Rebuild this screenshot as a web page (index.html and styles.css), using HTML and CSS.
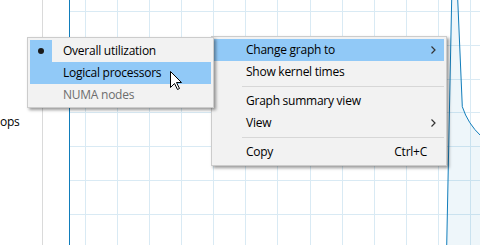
FILE: index.html
```html
<!DOCTYPE html>
<html lang="en">
<head>
  <meta charset="UTF-8" />
  <title>CPU graph menu</title>
  <link rel="stylesheet" href="styles.css">
</head>
<body>
  <div class="window">
    <div class="side"><span class="side-label">ops</span></div>
    <div class="gap"></div>
    <div class="graph">
      <svg class="graph-svg" width="410" height="245" viewBox="0 0 410 245">
        <g class="grid">
          <line x1="15.5" y1="0" x2="15.5" y2="245" />
          <line x1="47.5" y1="0" x2="47.5" y2="245" />
          <line x1="79.5" y1="0" x2="79.5" y2="245" />
          <line x1="111.5" y1="0" x2="111.5" y2="245" />
          <line x1="143.5" y1="0" x2="143.5" y2="245" />
          <line x1="175.5" y1="0" x2="175.5" y2="245" />
          <line x1="207.5" y1="0" x2="207.5" y2="245" />
          <line x1="240.5" y1="0" x2="240.5" y2="245" />
          <line x1="272.5" y1="0" x2="272.5" y2="245" />
          <line x1="304.5" y1="0" x2="304.5" y2="245" />
          <line x1="336.5" y1="0" x2="336.5" y2="245" />
          <line x1="368.5" y1="0" x2="368.5" y2="245" />
          <line x1="400.5" y1="0" x2="400.5" y2="245" />
          <line x1="0" y1="11.5" x2="410" y2="11.5" />
          <line x1="0" y1="45.5" x2="410" y2="45.5" />
          <line x1="0" y1="79.5" x2="410" y2="79.5" />
          <line x1="0" y1="112.5" x2="410" y2="112.5" />
          <line x1="0" y1="146.5" x2="410" y2="146.5" />
          <line x1="0" y1="180.5" x2="410" y2="180.5" />
          <line x1="0" y1="214.5" x2="410" y2="214.5" />
        </g>
        <path class="area" d="M376.7,246 L381.7,-1 L387.7,-1 L392.3,106.7 Q398,124 411,136 L411,246 Z" />
        <path class="curve" d="M376.7,246 L381.7,-1 M387.7,-1 L392.3,106.7 Q398,124 411,136" />
      </svg>
    </div>
  </div>

  <!-- context menu -->
  <div class="menu main-menu">
    <div class="menu-item active">
      <span class="label">Change graph to</span>
      <span class="arrow"><svg width="5" height="8" viewBox="0 0 5 8"><polyline points="0.5,0.5 4,4 0.5,7.5" /></svg></span>
    </div>
    <div class="menu-item"><span class="label">Show kernel times</span></div>
    <div class="separator"></div>
    <div class="menu-item"><span class="label">Graph summary view</span></div>
    <div class="menu-item">
      <span class="label">View</span>
      <span class="arrow"><svg width="5" height="8" viewBox="0 0 5 8"><polyline points="0.5,0.5 4,4 0.5,7.5" /></svg></span>
    </div>
    <div class="separator"></div>
    <div class="menu-item">
      <span class="label">Copy</span>
      <span class="shortcut">Ctrl+C</span>
    </div>
  </div>

  <!-- submenu -->
  <div class="menu sub-menu">
    <div class="sub-item">
      <span class="check checked"><span class="bullet"></span></span>
      <span class="sub-label">Overall utilization</span>
    </div>
    <div class="sub-item active">
      <span class="check"></span>
      <span class="sub-label">Logical processors</span>
    </div>
    <div class="sub-item disabled">
      <span class="check"></span>
      <span class="sub-label">NUMA nodes</span>
    </div>
  </div>

  <svg class="cursor" width="13" height="20" viewBox="0 0 13 20">
    <path d="M0.5,0.5 V16.5 L4.5,12.5 L7.5,18.5 L9.5,17.5 L6.5,11.5 H11.5 Z" />
  </svg>
</body>
</html>
```

FILE: styles.css
```css
body {
  margin: 0;
  width: 480px;
  height: 245px;
  overflow: hidden;
  background: #fff;
  font-family: 'Open Sans', 'Noto Sans', sans-serif;
  font-size: 12px;
  letter-spacing: -0.25px;
  color: #000;
}

.window {
  display: flex;
  height: 245px;
}

.side {
  width: 42px;
  border-right: 1px solid #dadada;
  padding-top: 114px;
  line-height: 16px;
  overflow: hidden;
  white-space: nowrap;
}

.gap {
  width: 26px;
}

.graph {
  flex: 1;
  border-left: 1px solid #117dbb;
  overflow: hidden;
}

.graph-svg {
  display: block;
}

.grid line {
  stroke: #d9eaf4;
  stroke-width: 1;
}

.area {
  fill: rgba(17, 125, 187, 0.07);
}

.curve {
  fill: none;
  stroke: #117dbb;
  stroke-width: 1;
}

/* menus */
.menu {
  position: absolute;
  background: #f2f2f2;
  border: 1px solid #cccccc;
  box-shadow: 2px 2px 3px rgba(0, 0, 0, 0.4);
  padding: 2px;
}

.main-menu {
  left: 211px;
  top: 36px;
  width: 230px;
}

.sub-menu {
  left: 27px;
  top: 37px;
  width: 181px;
  padding-bottom: 1px;
}

.menu-item {
  display: flex;
  align-items: center;
  height: 22px;
  line-height: 22px;
  padding-left: 32px;
}

.menu-item .label {
  flex: 1;
}

.menu-item.active,
.sub-item.active {
  background: #91c9f7;
}

.arrow {
  width: 22px;
  display: flex;
  align-items: center;
  justify-content: center;
}

.arrow svg {
  display: block;
}

.arrow polyline {
  fill: none;
  stroke: #333;
  stroke-width: 1.2;
}

.shortcut {
  margin-right: 17px;
}

.separator {
  height: 1px;
  background: #d7d7d7;
  margin: 3px 0 3px 28px;
}

.sub-item {
  display: flex;
  align-items: center;
  height: 22px;
  line-height: 22px;
}

.check {
  width: 22px;
  height: 22px;
  display: flex;
  align-items: center;
  justify-content: center;
}

.check.checked {
  background: #91c9f7;
}

.bullet {
  width: 6px;
  height: 6px;
  border-radius: 50%;
  background: #1a1a1a;
}

.sub-label {
  padding-left: 11px;
}

.sub-item.disabled {
  color: #6d6d6d;
}

.cursor {
  position: absolute;
  left: 170px;
  top: 71px;
}

.cursor path {
  fill: #fff;
  stroke: #000;
  stroke-width: 1;
}
```
